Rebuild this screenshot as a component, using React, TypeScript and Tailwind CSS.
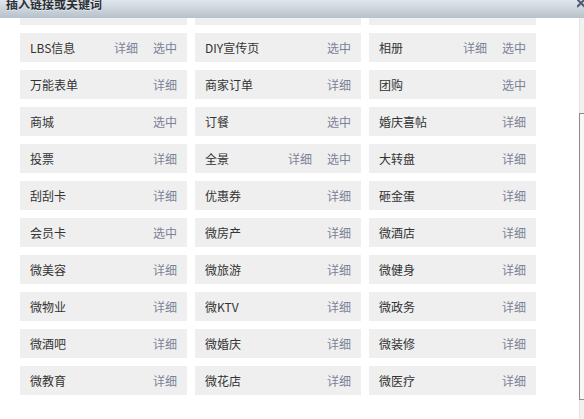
import React from "react";

type Item = { name: string; actions: string[] };

const rows: Item[][] = [
  [
    { name: "", actions: [] },
    { name: "", actions: [] },
    { name: "", actions: [] },
  ],
  [
    { name: "LBS信息", actions: ["详细", "选中"] },
    { name: "DIY宣传页", actions: ["选中"] },
    { name: "相册", actions: ["详细", "选中"] },
  ],
  [
    { name: "万能表单", actions: ["详细"] },
    { name: "商家订单", actions: ["详细"] },
    { name: "团购", actions: ["选中"] },
  ],
  [
    { name: "商城", actions: ["选中"] },
    { name: "订餐", actions: ["选中"] },
    { name: "婚庆喜帖", actions: ["详细"] },
  ],
  [
    { name: "投票", actions: ["详细"] },
    { name: "全景", actions: ["详细", "选中"] },
    { name: "大转盘", actions: ["详细"] },
  ],
  [
    { name: "刮刮卡", actions: ["详细"] },
    { name: "优惠券", actions: ["详细"] },
    { name: "砸金蛋", actions: ["详细"] },
  ],
  [
    { name: "会员卡", actions: ["选中"] },
    { name: "微房产", actions: ["详细"] },
    { name: "微酒店", actions: ["详细"] },
  ],
  [
    { name: "微美容", actions: ["详细"] },
    { name: "微旅游", actions: ["详细"] },
    { name: "微健身", actions: ["详细"] },
  ],
  [
    { name: "微物业", actions: ["详细"] },
    { name: "微KTV", actions: ["详细"] },
    { name: "微政务", actions: ["详细"] },
  ],
  [
    { name: "微酒吧", actions: ["详细"] },
    { name: "微婚庆", actions: ["详细"] },
    { name: "微装修", actions: ["详细"] },
  ],
  [
    { name: "微教育", actions: ["详细"] },
    { name: "微花店", actions: ["详细"] },
    { name: "微医疗", actions: ["详细"] },
  ],
];

function Cell({ item }: { item: Item }) {
  return (
    <div className="h-[29px] bg-[#efefef] flex items-center pl-[10px] pr-[10px] text-[12px] leading-[14px]">
      <span className="flex-1 text-[#333333] whitespace-nowrap">{item.name}</span>
      <div className="flex gap-[15px] text-[#7b8297]">
        {item.actions.map((a, i) => (
          <span key={i} className="whitespace-nowrap cursor-pointer">
            {a}
          </span>
        ))}
      </div>
    </div>
  );
}

export default function App() {
  return (
    <div
      className="w-[584px] h-[419px] overflow-hidden bg-white flex flex-col"
      style={{ fontFamily: '"Noto Sans CJK SC", "Noto Sans", sans-serif' }}
    >
      <div className="h-[18px] shrink-0 bg-gradient-to-b from-[#e0e6ed] to-[#b8c1cb] flex items-start overflow-hidden">
        <div className="flex-1 pl-[6px] mt-[-3px] text-[12px] leading-[14px] font-bold text-[#2a2f36] [text-shadow:0_1px_0_rgba(255,255,255,0.5)]">
          插入链接或关键词
        </div>
        <svg width="7" height="8" viewBox="0 0 7 8" className="shrink-0">
          <path d="M0 -1 L8 7 M0 7 L8 -1" stroke="#4d5d72" strokeWidth="2" fill="none" />
        </svg>
      </div>
      <div className="flex-1 flex overflow-hidden">
        <div className="flex-1 overflow-hidden">
          <div className="mt-[-22px] pl-[20px] grid grid-cols-[167px_166px_167px] gap-[8px]">
            {rows.flat().map((item, i) => (
              <Cell key={i} item={item} />
            ))}
          </div>
        </div>
        <div className="w-[5px] shrink-0 bg-[#f1f1f1] border-l border-[#e4e4e4] flex flex-col">
          <div className="h-[95px] shrink-0" />
          <div className="h-[287px] shrink-0 border-l border-t border-b border-[#8c8c8c] bg-[#f7f7f7] ml-[-1px]" />
        </div>
      </div>
    </div>
  );
}
